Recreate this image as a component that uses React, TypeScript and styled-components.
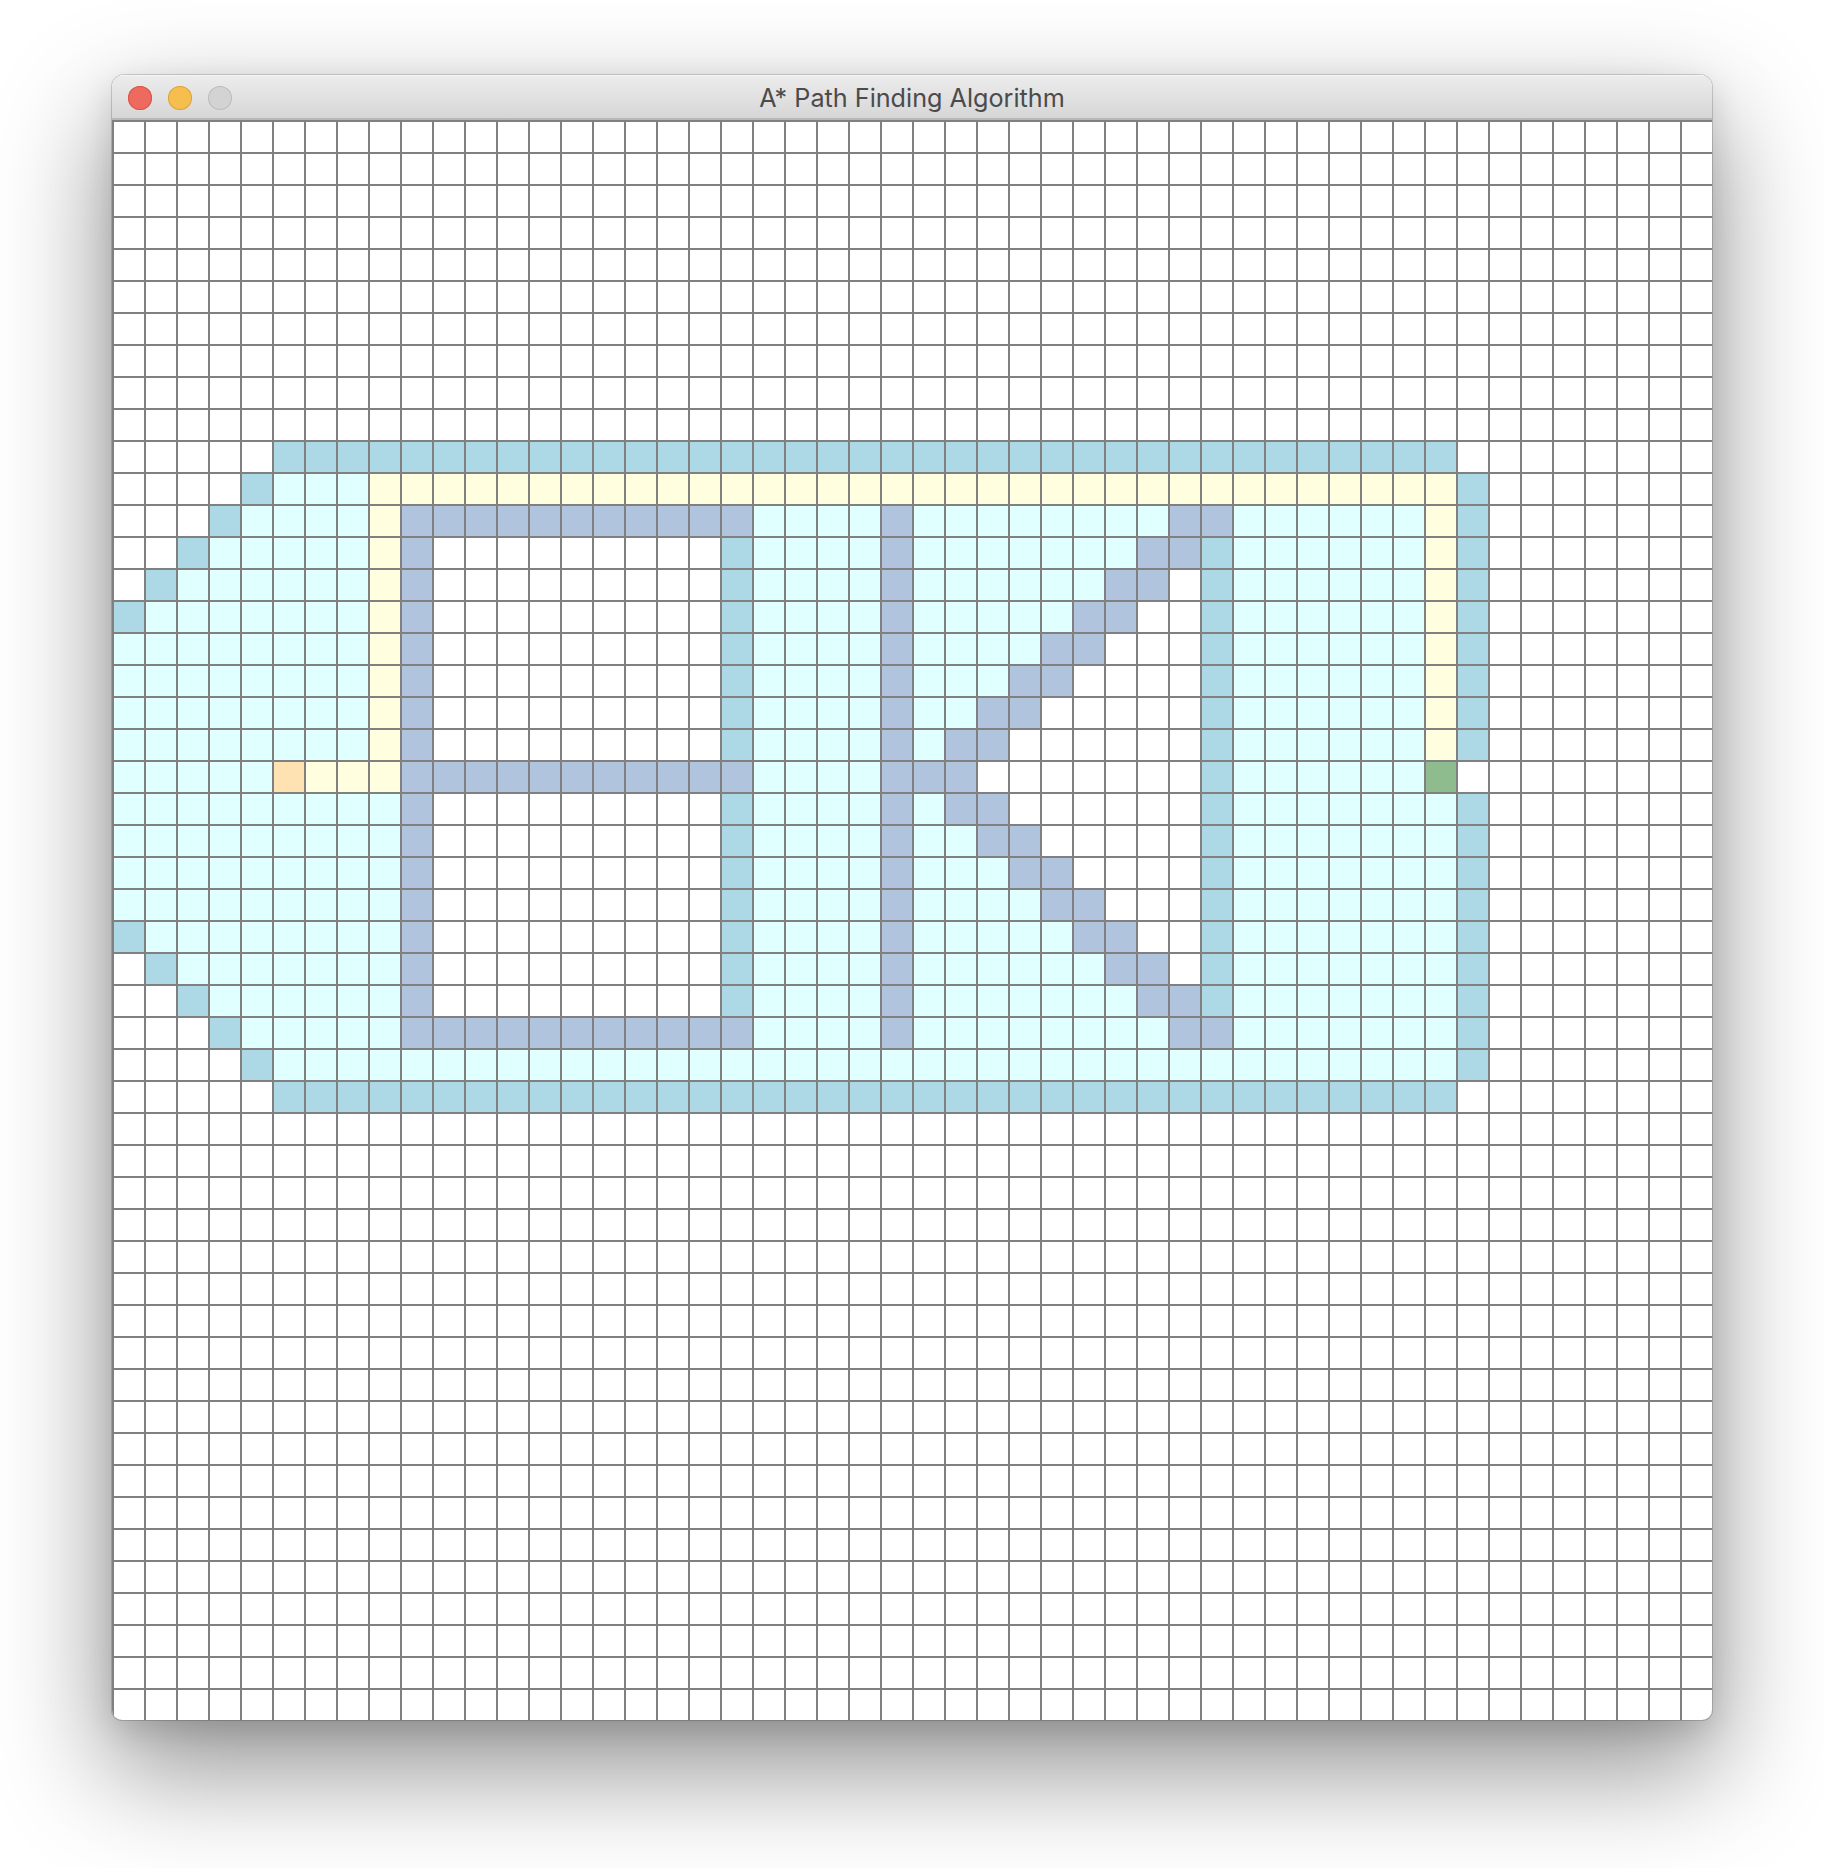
import React from "react";
import styled, { createGlobalStyle } from "styled-components";

const GlobalStyle = createGlobalStyle`
  html, body {
    margin: 0;
    padding: 0;
    background: #ffffff;
  }
  * { box-sizing: border-box; }
`;

type CellKind = "." | "L" | "C" | "Y" | "S" | "O" | "G";

const FILL: Record<CellKind, string> = {
  ".": "#ffffff",
  L: "#add8e6",
  C: "#e0ffff",
  Y: "#ffffe0",
  S: "#b0c4de",
  O: "#ffe2b2",
  G: "#8fbc8f",
};

const COLS = 50;
const ROWS = 50;

// run-length rows 10..30, columns 0..42 (rest is empty)
const RLE: Record<number, string> = {
  10: "5.37L1.",
  11: "4.1L3C34Y1L",
  12: "3.1L4C1Y11S4C1S8C2S6C1Y1L",
  13: "2.1L5C1Y1S9.1L4C1S7C2S1L6C1Y1L",
  14: "1.1L6C1Y1S9.1L4C1S6C2S1.1L6C1Y1L",
  15: "1L7C1Y1S9.1L4C1S5C2S2.1L6C1Y1L",
  16: "8C1Y1S9.1L4C1S4C2S3.1L6C1Y1L",
  17: "8C1Y1S9.1L4C1S3C2S4.1L6C1Y1L",
  18: "8C1Y1S9.1L4C1S2C2S5.1L6C1Y1L",
  19: "8C1Y1S9.1L4C1S1C2S6.1L6C1Y1L",
  20: "5C1O3Y11S4C3S7.1L6C1G1.",
  21: "9C1S9.1L4C1S1C2S6.1L7C1L",
  22: "9C1S9.1L4C1S2C2S5.1L7C1L",
  23: "9C1S9.1L4C1S3C2S4.1L7C1L",
  24: "9C1S9.1L4C1S4C2S3.1L7C1L",
  25: "1L8C1S9.1L4C1S5C2S2.1L7C1L",
  26: "1.1L7C1S9.1L4C1S6C2S1.1L7C1L",
  27: "2.1L6C1S9.1L4C1S7C2S1L7C1L",
  28: "3.1L5C11S4C1S8C2S7C1L",
  29: "4.1L37C1L",
  30: "5.37L1.",
};

function decode(rle: string): CellKind[] {
  const out: CellKind[] = [];
  const re = /(\d+)(\D)/g;
  let m: RegExpExecArray | null;
  while ((m = re.exec(rle)) !== null) {
    const n = parseInt(m[1], 10);
    for (let i = 0; i < n; i++) out.push(m[2] as CellKind);
  }
  while (out.length < COLS) out.push(".");
  return out;
}

const cells: CellKind[] = [];
for (let r = 0; r < ROWS; r++) {
  const row = RLE[r] ? decode(RLE[r]) : new Array<CellKind>(COLS).fill(".");
  cells.push(...row);
}

const Page = styled.div`
  padding: 75px 112px 148px 112px;
  width: 1824px;
  min-height: 1868px;
  background: #ffffff;
`;

const Window = styled.div`
  width: 1600px;
  border-radius: 12px 12px 10px 10px;
  overflow: hidden;
  background: #ffffff;
  box-shadow: 0 0 0 1px rgba(0, 0, 0, 0.16), 0 46px 110px 6px rgba(0, 0, 0, 0.42),
    0 10px 30px rgba(0, 0, 0, 0.12);
`;

const TitleBar = styled.div`
  height: 45px;
  display: grid;
  grid-template-columns: 1fr auto 1fr;
  align-items: center;
  background: linear-gradient(to bottom, #ececec 0%, #e3e3e3 45%, #d6d6d6 100%);
  border-bottom: 2px solid #b8b8b8;
  box-shadow: inset 0 1px 0 #f6f6f6;
  padding: 3px 16px 0 16px;
`;

const Lights = styled.div`
  display: flex;
  gap: 16px;
  align-items: center;
`;

const Light = styled.span<{ $fill: string; $ring: string }>`
  width: 24px;
  height: 24px;
  border-radius: 50%;
  background: ${(p) => p.$fill};
  box-shadow: inset 0 0 0 1px ${(p) => p.$ring};
`;

const Title = styled.div`
  font-family: Inter, "Liberation Sans", "Noto Sans", sans-serif;
  font-size: 25.2px;
  color: #4b4b4b;
  white-space: nowrap;
`;

const Grid = styled.div`
  display: grid;
  grid-template-columns: repeat(${COLS}, 30px);
  grid-auto-rows: 30px;
  gap: 2px;
  padding: 2px 0 0 2px;
  background: #808080;
`;

const Cell = styled.div<{ $kind: CellKind }>`
  background: ${(p) => FILL[p.$kind]};
`;

export default function App() {
  return (
    <>
      <GlobalStyle />
      <Page>
        <Window>
          <TitleBar>
            <Lights>
              <Light $fill="#ee6a5f" $ring="#d8544a" />
              <Light $fill="#f6be4f" $ring="#dca43e" />
              <Light $fill="#d3d3d3" $ring="#bdbdbd" />
            </Lights>
            <Title>A* Path Finding Algorithm</Title>
            <div />
          </TitleBar>
          <Grid>
            {cells.map((k, i) => (
              <Cell key={i} $kind={k} />
            ))}
          </Grid>
        </Window>
      </Page>
    </>
  );
}
